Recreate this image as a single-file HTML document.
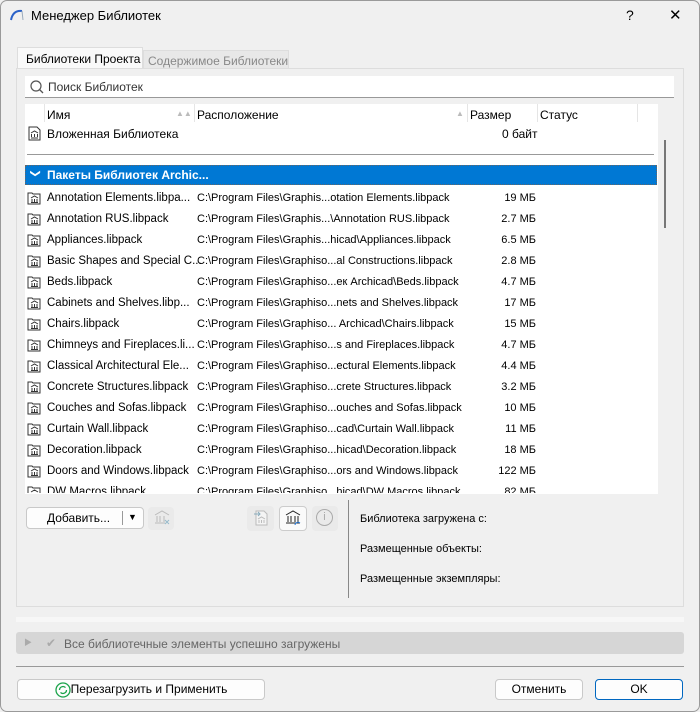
<!DOCTYPE html>
<html><head><meta charset="utf-8"><style>
*{box-sizing:border-box;margin:0;padding:0}
body{width:700px;height:712px;background:#f0f0f0;font-family:"Liberation Sans","Noto Sans CJK SC",sans-serif;font-size:11px;color:#000;position:relative;overflow:hidden}
.a{position:absolute;white-space:nowrap}
.win{position:absolute;left:0;top:0;width:700px;height:712px;border:1px solid #9a9a9a;border-radius:7px;background:#f0f0f0}
.row{position:absolute;left:25px;width:632px;height:21px;line-height:22px}
.row span{position:absolute;top:0}
.ic{position:absolute;left:2px;top:3px;width:15px;height:15px}
.btn{position:absolute;background:#fdfdfd;border:1px solid #c9c9c9;border-radius:4px;text-align:center;font-size:12px}
</style></head><body>
<div class="win"></div>
<svg class="a" style="left:9px;top:8px" width="16" height="14"><path d="M2 12 Q4 2 13 3" stroke="#2b62c8" stroke-width="2" fill="none"/><path d="M13 3 L14 12" stroke="#9ab" stroke-width="1" fill="none"/></svg>
<div class="a" style="left:31px;top:8px;font-size:13px">Менеджер Библиотек</div>
<div class="a" style="left:626px;top:7px;font-size:14px">?</div>
<div class="a" style="left:669px;top:6px;font-size:15px;font-weight:300">✕</div>
<!-- tabs -->
<div class="a" style="left:17px;top:47px;width:126px;height:22px;background:#f9f9f9;border:1px solid #ddd;border-bottom:none;padding:4px 0 0 8px;font-size:12px">Библиотеки Проекта</div>
<div class="a" style="left:143px;top:50px;width:146px;height:19px;background:#e8e8e8;border:1px solid #ddd;border-bottom:none;padding:3px 0 0 4px;font-size:12px;color:#888">Содержимое Библиотеки</div>
<div class="a" style="left:16px;top:68px;width:668px;height:539px;border:1px solid #ddd;background:#f0f0f0"></div>
<!-- search -->
<div class="a" style="left:25px;top:76px;width:649px;height:22px;background:#fff;border-bottom:1px solid #999"></div>
<svg class="a" style="left:29px;top:79px" width="16" height="16"><circle cx="7" cy="7" r="5" stroke="#555" fill="none" stroke-width="1.2"/><path d="M10.5 10.5 L14 14" stroke="#555" stroke-width="1.3"/></svg>
<div class="a" style="left:48px;top:80px;font-size:12px;color:#333">Поиск Библиотек</div>
<!-- list -->
<div class="a" style="left:25px;top:104px;width:633px;height:390px;background:#fff"></div>
<div class="a" style="left:44px;top:104px;width:1px;height:18px;background:#e5e5e5"></div>
<div class="a" style="left:194px;top:104px;width:1px;height:18px;background:#e5e5e5"></div>
<div class="a" style="left:467px;top:104px;width:1px;height:18px;background:#e5e5e5"></div>
<div class="a" style="left:537px;top:104px;width:1px;height:18px;background:#e5e5e5"></div>
<div class="a" style="left:637px;top:104px;width:1px;height:18px;background:#e5e5e5"></div>
<div class="a" style="left:47px;top:108px;font-size:12px">Имя</div>
<div class="a" style="left:176px;top:109px;font-size:8px;color:#bbb">▲▲</div>
<div class="a" style="left:197px;top:108px;font-size:12px">Расположение</div>
<div class="a" style="left:456px;top:109px;font-size:8px;color:#bbb">▲</div>
<div class="a" style="left:470px;top:108px;font-size:12px">Размер</div>
<div class="a" style="left:540px;top:108px;font-size:12px">Статус</div>
<div class="a" style="left:664px;top:140px;width:2px;height:88px;background:#777"></div>
<div class="row" style="top:123px"><svg class="ic" viewBox="0 0 15 15"><path d="M2 1H10L13 4V14H2Z" fill="#fff" stroke="#333"/><path d="M4 7L7.5 5L11 7M4.5 8V11M7.5 8V11M10.5 8V11M4 12H11" stroke="#333" fill="none"/></svg><span style="left:22px;font-size:12px">Вложенная Библиотека</span><span style="left:477px;font-size:12px">0 байт</span></div>
<div class="a" style="left:27px;top:154px;width:627px;height:1px;background:#999"></div>
<div class="a" style="left:25px;top:165px;width:632px;height:20px;background:#0078d4;border:1px dotted #666"></div>
<div class="a" style="left:31px;top:168px;color:#fff;font-size:10px;transform:rotate(90deg)">❯</div>
<div class="a" style="left:47px;top:168px;color:#fff;font-weight:bold;font-size:12px">Пакеты Библиотек Archic...</div>
<div id="rows"></div>
<!-- bottom controls -->
<div class="btn" style="left:26px;top:507px;width:118px;height:22px;line-height:20px;text-align:left;padding-left:20px">Добавить...</div>
<div class="a" style="left:122px;top:511px;width:1px;height:14px;background:#999"></div>
<div class="a" style="left:128px;top:512px;font-size:9px">▼</div>
<div class="a" style="left:148px;top:507px;width:26px;height:23px;border-radius:4px;background:#eaeaea"></div>
<svg class="a" style="left:153px;top:510px" width="18" height="16"><path d="M2 5L9 1L16 5M4 6V12M7 6V12M11 6V12M2 13H12" stroke="#bbb" fill="none"/><path d="M12 10L16 14M16 10L12 14" stroke="#9bc" fill="none"/></svg>
<div class="a" style="left:247px;top:506px;width:27px;height:25px;border-radius:4px;background:#eaeaea"></div>
<svg class="a" style="left:252px;top:509px" width="18" height="18"><path d="M4 2H12L15 5V16H4Z" fill="#f4f4f4" stroke="#bbb"/><path d="M6 10L9.5 8L13 10M7 11V14M9.5 11V14M12 11V14" stroke="#bbb" fill="none"/><path d="M2 5H8M6 3L8 5L6 7" stroke="#8ab" fill="none"/></svg>
<div class="a" style="left:279px;top:506px;width:28px;height:25px;border-radius:4px;background:#fafafa;border:1px solid #ccc"></div>
<svg class="a" style="left:284px;top:510px" width="18" height="16"><path d="M2 5L9 1L16 5M4 6V12M7 6V12M11 6V12M14 6V12M2 13H16" stroke="#222" fill="none"/><path d="M11 15a3 3 0 0 1 5-2" stroke="#2b7bd6" fill="none"/></svg>
<div class="a" style="left:312px;top:506px;width:26px;height:25px;border-radius:4px;background:#eaeaea"></div>
<div class="a" style="left:316px;top:509px;width:17px;height:17px;border:1px solid #aaa;border-radius:50%;text-align:center;font-size:11px;color:#aaa;line-height:15px">i</div>
<div class="a" style="left:348px;top:500px;width:1px;height:98px;background:#888"></div>
<div class="a" style="left:360px;top:513px;font-size:11px">Библиотека загружена с:</div>
<div class="a" style="left:360px;top:543px;font-size:11px">Размещенные объекты:</div>
<div class="a" style="left:360px;top:573px;font-size:11px">Размещенные экземпляры:</div>
<div class="a" style="left:16px;top:617px;width:668px;height:5px;background:#f7f7f7"></div>
<div class="a" style="left:16px;top:632px;width:668px;height:22px;background:#d6d6d6;border-radius:3px"></div>
<div class="a" style="left:24px;top:637px;font-size:8px;color:#aaa">▶</div>
<div class="a" style="left:46px;top:636px;font-size:12px;color:#aaa">✔</div>
<div class="a" style="left:64px;top:637px;font-size:12px;color:#666">Все библиотечные элементы успешно загружены</div>
<div class="a" style="left:16px;top:666px;width:668px;height:1px;background:#999"></div>
<div class="btn" style="left:17px;top:679px;width:248px;height:21px;line-height:19px;padding-left:16px">Перезагрузить и Применить</div>
<svg class="a" style="left:55px;top:682px" width="16" height="16"><circle cx="8" cy="8" r="7" stroke="#1aa34a" fill="none" stroke-width="1.3"/><path d="M4.5 8a3.5 3.5 0 0 1 6-2.4M11.5 8a3.5 3.5 0 0 1-6 2.4" stroke="#1aa34a" fill="none" stroke-width="1.3"/></svg>
<div class="btn" style="left:495px;top:679px;width:88px;height:21px;line-height:19px">Отменить</div>
<div class="btn" style="left:595px;top:679px;width:88px;height:21px;line-height:19px;border-color:#0067c0">OK</div>
<script>
var d=[["Annotation Elements.libpa...","C:\\Program Files\\Graphis...otation Elements.libpack","19 МБ"],
["Annotation RUS.libpack","C:\\Program Files\\Graphis...\\Annotation RUS.libpack","2.7 МБ"],
["Appliances.libpack","C:\\Program Files\\Graphis...hicad\\Appliances.libpack","6.5 МБ"],
["Basic Shapes and Special C...","C:\\Program Files\\Graphiso...al Constructions.libpack","2.8 МБ"],
["Beds.libpack","C:\\Program Files\\Graphiso...ек Archicad\\Beds.libpack","4.7 МБ"],
["Cabinets and Shelves.libp...","C:\\Program Files\\Graphiso...nets and Shelves.libpack","17 МБ"],
["Chairs.libpack","C:\\Program Files\\Graphiso... Archicad\\Chairs.libpack","15 МБ"],
["Chimneys and Fireplaces.li...","C:\\Program Files\\Graphiso...s and Fireplaces.libpack","4.7 МБ"],
["Classical Architectural Ele...","C:\\Program Files\\Graphiso...ectural Elements.libpack","4.4 МБ"],
["Concrete Structures.libpack","C:\\Program Files\\Graphiso...crete Structures.libpack","3.2 МБ"],
["Couches and Sofas.libpack","C:\\Program Files\\Graphiso...ouches and Sofas.libpack","10 МБ"],
["Curtain Wall.libpack","C:\\Program Files\\Graphiso...cad\\Curtain Wall.libpack","11 МБ"],
["Decoration.libpack","C:\\Program Files\\Graphiso...hicad\\Decoration.libpack","18 МБ"],
["Doors and Windows.libpack","C:\\Program Files\\Graphiso...ors and Windows.libpack","122 МБ"],
["DW Macros.libpack","C:\\Program Files\\Graphiso...hicad\\DW Macros.libpack","82 МБ"]];
var h="";d.forEach(function(r,i){h+='<div class="row" style="top:'+(187+21*i)+'px;'+(i==14?'height:12px;overflow:hidden':'')+'"><svg class="ic" viewBox="0 0 15 15"><path d="M1 3H5L6 4H13V14H1Z" fill="#fff" stroke="#333"/><path d="M4 8L7.5 6L11 8M5 9V12M7.5 9V12M10 9V12M4 12.5H11" stroke="#333" fill="none"/></svg><span style="left:22px;font-size:11.5px">'+r[0]+'</span><span style="left:172px;font-size:11px">'+r[1]+'</span><span style="right:121px;font-size:11px">'+r[2]+'</span></div>'});
document.getElementById("rows").innerHTML=h;
</script>
</body></html>
